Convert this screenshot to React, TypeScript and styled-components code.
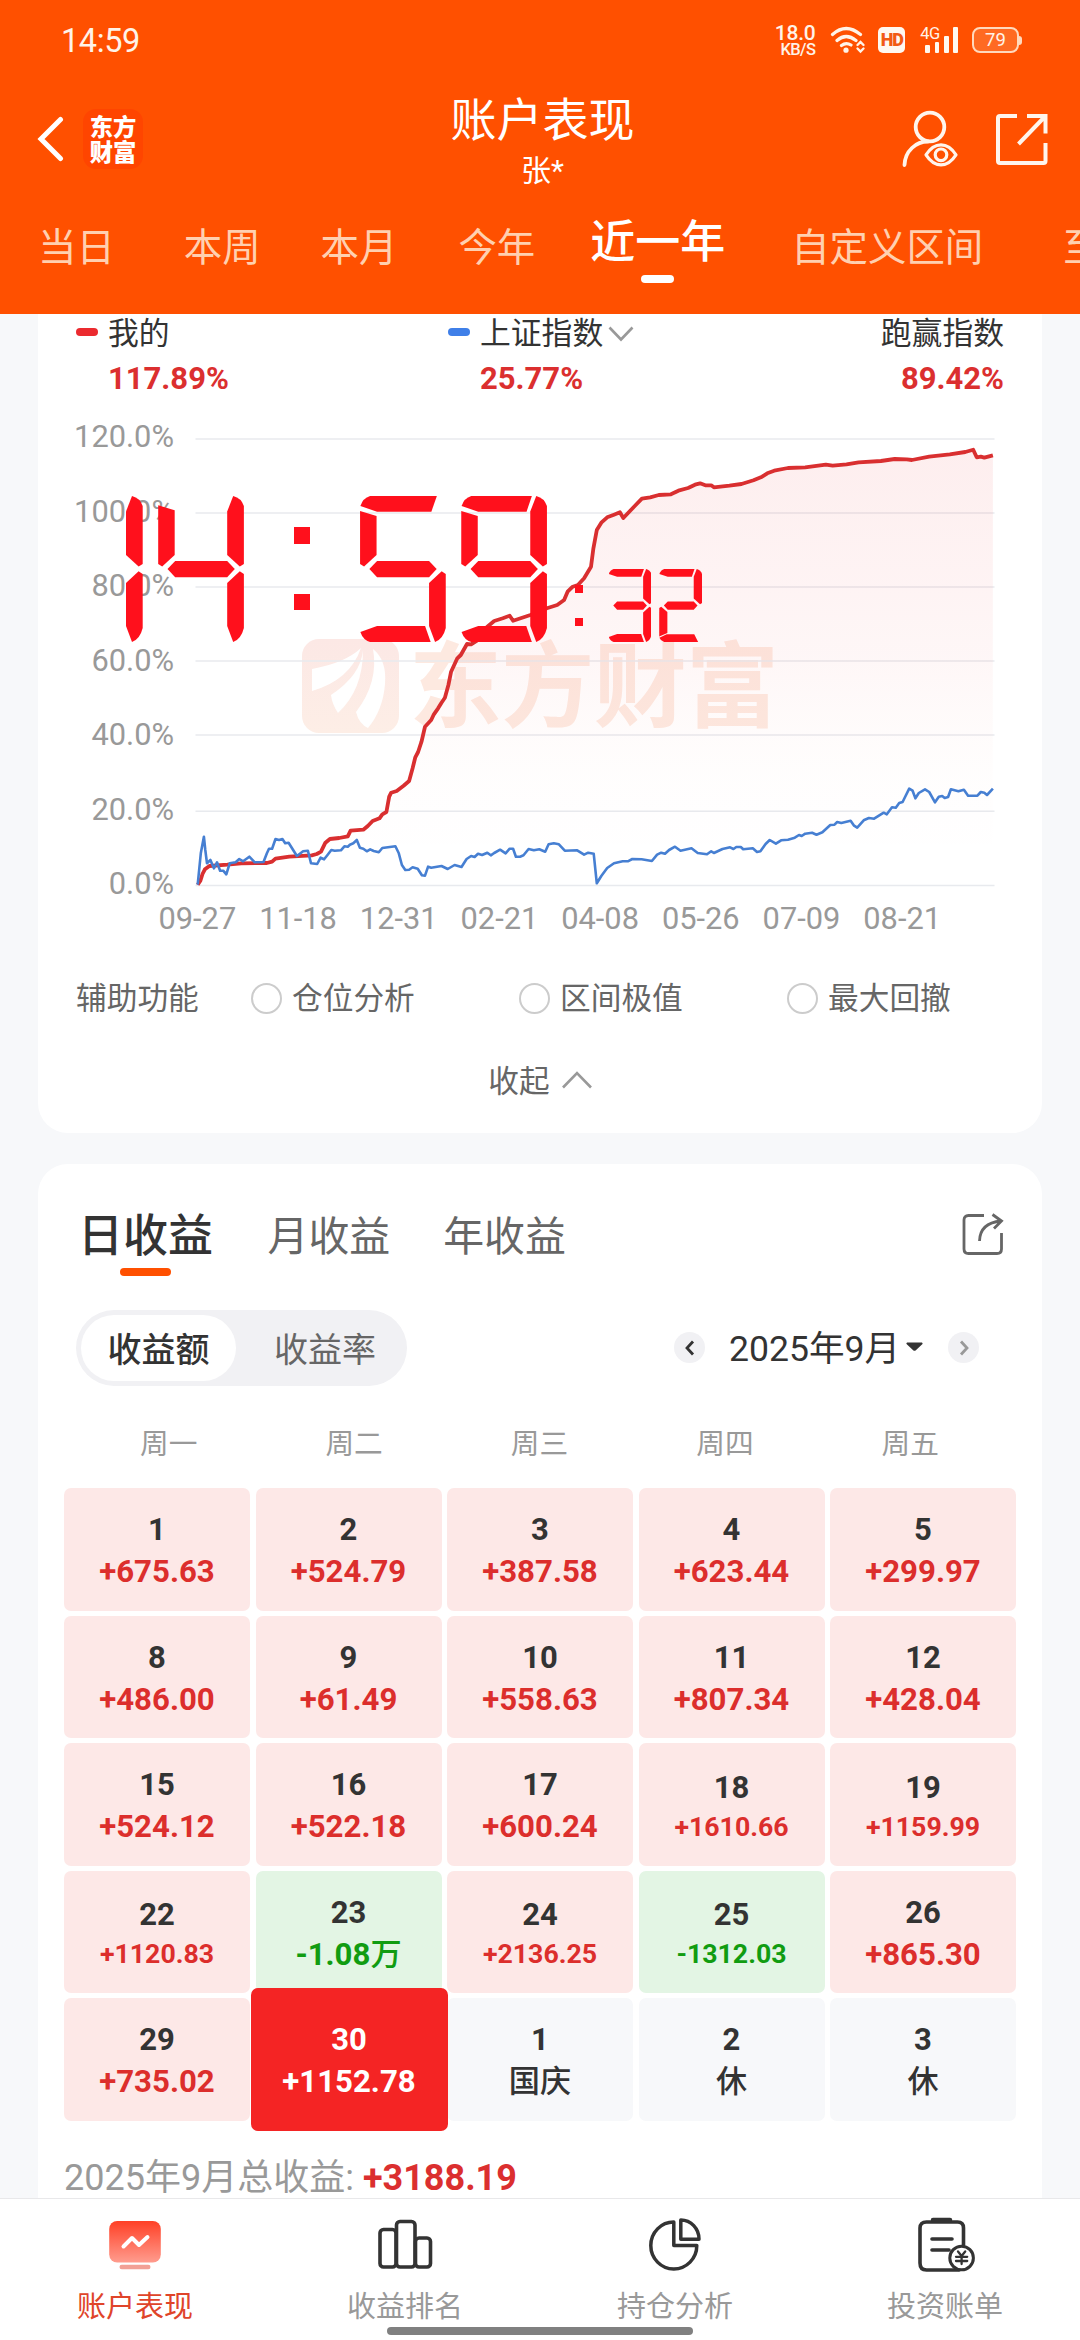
import React from 'react';
import styled, { createGlobalStyle, css } from 'styled-components';

const GlobalStyle = createGlobalStyle`
  * { box-sizing: border-box; }
  html, body { margin: 0; padding: 0; background: #f7f8fa; }
  body {
    font-family: Roboto, "Noto Sans CJK SC", sans-serif;
    line-height: 1;
    color: #333;
  }
  svg { display: block; flex: none; }
`;

const Page = styled.div`
  width: 1080px;
  height: 2340px;
  overflow: hidden;
  display: flex;
  flex-direction: column;
  position: relative;
  background: #f7f8fa;
`;

/* ---------- header ---------- */

const Header = styled.header`
  flex: none;
  height: 314px;
  background: #ff5000;
  color: #fff;
  display: flex;
  flex-direction: column;
`;

const StatusBar = styled.div`
  height: 80px;
  padding: 0 58px 0 61px;
  display: flex;
  align-items: center;
  justify-content: space-between;
`;

const StatusTime = styled.div`
  font-size: 32.5px;
  letter-spacing: -0.4px;
  color: #fff3e8;
  padding-top: 2px;
`;

const StatusIcons = styled.div`
  display: flex;
  align-items: center;
  color: #fff3e8;
`;

const NetSpeed = styled.div`
  width: 40px;
  margin-right: 15px;
  padding-top: 2px;
  text-align: right;
  font-weight: 500;
  display: flex;
  flex-direction: column;
  align-items: flex-end;
`;

const SpeedValue = styled.span`
  font-size: 21px;
  line-height: 17px;
  letter-spacing: -0.3px;
`;

const SpeedUnit = styled.span`
  font-size: 16.5px;
  line-height: 16px;
  letter-spacing: -0.6px;
`;

const HdBadge = styled.div`
  width: 27px;
  height: 26px;
  margin: 0 15px 0 12px;
  border-radius: 5px;
  background: #fff8f0;
  color: #f25a14;
  font-size: 18px;
  font-weight: 900;
  letter-spacing: -1px;
  display: flex;
  align-items: center;
  justify-content: center;
`;

const Signal = styled.div`
  display: flex;
  align-items: flex-end;
  height: 26px;
  position: relative;
  padding-left: 5px;
  gap: 4.5px;
  margin-right: 14px;
`;

const SignalBar = styled.i<{ $h: number }>`
  width: 4.8px;
  height: ${(p) => p.$h}px;
  border-radius: 1px;
  background: #fff8f0;
`;

const SignalType = styled.span`
  position: absolute;
  left: 0;
  top: 0;
  font-size: 16.5px;
  line-height: 14px;
  letter-spacing: -0.6px;
`;

const Battery = styled.div`
  width: 47px;
  height: 26px;
  border: 2.5px solid #ffd9bd;
  border-radius: 8px;
  background: #ff6a22;
  display: flex;
  align-items: center;
  justify-content: center;
  font-size: 18.5px;
`;

const BatteryNub = styled.i`
  width: 3px;
  height: 9px;
  border-radius: 0 3px 3px 0;
  background: #ffd9bd;
`;

const TitleBar = styled.div`
  height: 118px;
  padding: 0 32px 0 37px;
  display: grid;
  grid-template-columns: 1fr auto 1fr;
  align-items: center;
`;

const TitleLeft = styled.div`
  display: flex;
  align-items: center;
  gap: 19px;
`;

const Brand = styled.div`
  width: 60px;
  height: 60px;
  border-radius: 13px;
  background: #ff4500;
  font-family: "Noto Sans CJK SC", sans-serif;
  font-weight: 900;
  font-size: 23.3px;
  line-height: 25px;
  display: flex;
  flex-direction: column;
  align-items: center;
  justify-content: center;
`;

const TitleBlock = styled.div`
  display: flex;
  flex-direction: column;
  align-items: center;
  padding-top: 4px;
`;

const Title = styled.h1`
  margin: 0;
  font-weight: 400;
  font-size: 46px;
  line-height: 50px;
`;

const Subtitle = styled.div`
  margin-top: 9px;
  font-size: 30px;
  line-height: 34px;
`;

const TitleRight = styled.div`
  display: flex;
  align-items: center;
  justify-content: flex-end;
  gap: 36px;
`;

const RangeTabs = styled.nav`
  height: 116px;
  padding-left: 38px;
  display: flex;
  align-items: flex-start;
  overflow: hidden;
`;

const RangeTab = styled.div<{ $active?: boolean; $gap: number }>`
  flex: none;
  margin-right: ${(p) => p.$gap}px;
  display: flex;
  flex-direction: column;
  align-items: center;
  white-space: nowrap;
  ${(p) =>
    p.$active
      ? css`
          padding-top: 22px;
          font-size: 45px;
          line-height: 45px;
          font-weight: 500;
          color: #fff;
        `
      : css`
          padding-top: 31px;
          font-size: 38.4px;
          line-height: 38px;
          color: #ffd0b0;
        `}
`;

const RangeMark = styled.i`
  margin-top: 10px;
  width: 33px;
  height: 8px;
  border-radius: 4px;
  background: #fff;
`;

/* ---------- chart card ---------- */

const Content = styled.main`
  flex: 1;
  min-height: 0;
  overflow: hidden;
  padding: 0 38px;
  display: flex;
  flex-direction: column;
  gap: 31px;
`;

const ChartCard = styled.section`
  flex: none;
  height: 819px;
  background: #fff;
  border-radius: 0 0 30px 30px;
  padding: 0 38px;
`;

const Legend = styled.div`
  display: grid;
  grid-template-columns: 372px 1fr auto;
`;

const LegendItem = styled.div<{ $right?: boolean }>`
  display: grid;
  grid-template-columns: ${(p) => (p.$right ? 'auto' : '32px auto')};
  justify-content: ${(p) => (p.$right ? 'end' : 'start')};
  row-gap: 10px;
`;

const LegendMark = styled.i<{ $color: string }>`
  align-self: center;
  width: 22px;
  height: 8px;
  margin-top: -1px;
  border-radius: 4px;
  background: ${(p) => p.$color};
`;

const LegendName = styled.div`
  height: 36px;
  padding-top: 4px;
  display: flex;
  align-items: center;
  gap: 5px;
  font-size: 30.8px;
`;

const LegendValue = styled.div<{ $indent?: boolean }>`
  grid-column: ${(p) => (p.$indent ? 2 : 1)};
  height: 36px;
  line-height: 38px;
  font-size: 31px;
  font-weight: 700;
  color: #db2f2f;
  text-align: ${(p) => (p.$indent ? 'left' : 'right')};
`;

const Plot = styled.div`
  margin-top: 24px;
  height: 479px;
  display: flex;
  gap: 21px;
`;

const YAxis = styled.div`
  width: 98px;
  display: flex;
  flex-direction: column;
  justify-content: space-between;
  align-items: flex-end;
  padding-top: 1px;
  margin-bottom: -1px;
  font-size: 30.8px;
  line-height: 32px;
  color: #999;
`;

const XAxis = styled.div`
  margin: 1px 0 0 71px;
  display: flex;
  font-size: 30.8px;
  line-height: 37px;
  height: 36px;
  color: #999;
`;

const XLabel = styled.span`
  width: 100.7px;
  text-align: center;
`;

const Helpers = styled.div`
  margin-top: 43px;
  height: 40px;
  display: flex;
  align-items: center;
  font-size: 30.7px;
  color: #666;
`;

const HelpersLabel = styled.span`
  flex: none;
  width: 175px;
  padding-top: 1px;
`;

const Option = styled.label`
  width: 268px;
  flex: none;
  display: flex;
  align-items: center;
  gap: 10px;
`;

const OptionName = styled.span`
  padding-top: 1px;
`;

const Radio = styled.i`
  width: 31px;
  height: 31px;
  border: 2.5px solid #ccc;
  border-radius: 50%;
`;

const Collapse = styled.div`
  margin-top: 43px;
  height: 40px;
  padding-top: 1px;
  display: flex;
  align-items: center;
  justify-content: center;
  gap: 12px;
  font-size: 30.7px;
  color: #666;
`;

const CollapseIcon = styled.span`
  margin-top: -6px;
`;

/* ---------- calendar card ---------- */

const CalendarCard = styled.section`
  flex: none;
  height: 1100px;
  background: #fff;
  border-radius: 30px 30px 0 0;
  padding: 0 26px;
`;

const ProfitTabs = styled.div`
  height: 112px;
  padding: 0 12px 0 14px;
  display: flex;
  align-items: flex-end;
`;

const ProfitTab = styled.div<{ $active?: boolean }>`
  display: flex;
  flex-direction: column;
  align-items: center;
  gap: 9px;
  margin-right: ${(p) => (p.$active ? 54.5 : 53)}px;
  font-size: ${(p) => (p.$active ? 45 : 40.9)}px;
  font-weight: ${(p) => (p.$active ? 500 : 400)};
  line-height: 44px;
  color: ${(p) => (p.$active ? '#333' : '#666')};
`;

const ProfitMark = styled.i<{ $on?: boolean }>`
  width: 51px;
  height: 8px;
  border-radius: 4px;
  background: ${(p) => (p.$on ? '#ff5000' : 'transparent')};
`;

const ShareSlot = styled.div`
  margin-left: auto;
  padding-bottom: 20px;
`;

const FilterRow = styled.div`
  margin-top: 34px;
  height: 76px;
  padding: 0 37px 0 12px;
  display: flex;
  align-items: center;
  justify-content: space-between;
`;

const Segmented = styled.div`
  width: 331px;
  height: 76px;
  padding: 5px;
  border-radius: 38px;
  background: #f1f1f4;
  display: flex;
`;

const Segment = styled.div<{ $on?: boolean }>`
  width: ${(p) => (p.$on ? 155 : 166)}px;
  height: 66px;
  padding: 3px ${(p) => (p.$on ? 0 : 2)}px 0 ${(p) => (p.$on ? 0 : 14)}px;
  border-radius: 33px;
  display: flex;
  align-items: center;
  justify-content: center;
  font-size: 34px;
  font-weight: ${(p) => (p.$on ? 500 : 400)};
  color: ${(p) => (p.$on ? '#333' : '#666')};
  background: ${(p) => (p.$on ? '#fff' : 'transparent')};
`;

const MonthPicker = styled.div`
  display: flex;
  align-items: center;
  margin-top: -1px;
`;

const RoundButton = styled.span`
  width: 31px;
  height: 31px;
  border-radius: 50%;
  background: #f1f1f4;
  display: flex;
  align-items: center;
  justify-content: center;
`;

const Month = styled.div`
  width: 243px;
  padding: 5px 0 0 24px;
  display: flex;
  align-items: center;
  gap: 6px;
  font-size: 35.6px;
  white-space: nowrap;
`;

const CaretSlot = styled.span`
  margin-top: -7px;
`;

const Weekdays = styled.div`
  margin: 38px 0 0 12px;
  width: 927px;
  display: grid;
  grid-template-columns: repeat(5, 1fr);
  text-align: center;
  font-size: 28.7px;
  line-height: 40px;
  color: #999;
`;

const Days = styled.div`
  margin-top: 24px;
  display: grid;
  grid-template-columns: repeat(5, 1fr);
  grid-auto-rows: 122.5px;
  gap: 5px 5.5px;
`;

type Tone = 'up' | 'down' | 'off' | 'today';

const toneBack: Record<Tone, string> = {
  up: '#fde8e7',
  down: '#e3f5e4',
  off: '#f7f8fa',
  today: '#f42424',
};
const toneText: Record<Tone, string> = {
  up: '#dc2e2c',
  down: '#119c11',
  off: '#333',
  today: '#fff',
};

const Day = styled.div<{ $tone: Tone }>`
  border-radius: 7px;
  padding-top: 4px;
  display: flex;
  flex-direction: column;
  align-items: center;
  justify-content: center;
  background: ${(p) => toneBack[p.$tone]};
  ${(p) =>
    p.$tone === 'today' &&
    css`
      margin: -10px -6px -10px -5px;
      z-index: 1;
    `}
`;

const DayNumber = styled.span<{ $tone: Tone }>`
  font-size: 31px;
  line-height: 42px;
  font-weight: 700;
  color: ${(p) => (p.$tone === 'today' ? '#fff' : '#333')};
`;

const DayValue = styled.span<{ $tone: Tone; $small: boolean }>`
  font-size: ${(p) => (p.$small ? 26.7 : 31.2)}px;
  line-height: ${(p) => (p.$small ? 37 : 42)}px;
  font-weight: ${(p) => (p.$tone === 'off' ? 500 : 700)};
  color: ${(p) => toneText[p.$tone]};
`;

const Unit = styled.span`
  font-weight: 500;
`;

const Total = styled.div`
  margin-top: 36px;
  display: flex;
  gap: 9px;
  font-size: 36px;
  line-height: 42px;
  color: #999;
`;

const TotalValue = styled.b`
  font-weight: 700;
  color: #db2f2f;
`;

/* ---------- bottom navigation ---------- */

const BottomNav = styled.nav`
  flex: none;
  height: 142px;
  border-top: 1px solid #e8e8ea;
  background: #fff;
  display: grid;
  grid-template-columns: repeat(4, 1fr);
`;

const NavItem = styled.div<{ $active?: boolean }>`
  padding-top: 16px;
  display: flex;
  flex-direction: column;
  align-items: center;
  font-size: 29px;
  line-height: 32px;
  gap: 14px;
  color: ${(p) => (p.$active ? '#e0442a' : '#999')};
`;

const HomeIndicator = styled.i`
  position: absolute;
  left: 387px;
  bottom: 5px;
  width: 306px;
  height: 8px;
  border-radius: 4px;
  background: #808080;
`;

/* ---------- seven segment clock floating over the page ---------- */

const Clock = styled.div`
  position: absolute;
  left: 57px;
  top: 496px;
  height: 146px;
  display: flex;
  align-items: flex-end;
  z-index: 5;
`;

const ClockGroup = styled.div<{ $scale: number; $ml: number }>`
  zoom: ${(p) => p.$scale};
  margin-left: ${(p) => p.$ml}px;
  display: flex;
  gap: 15.5px;
`;

const DigitBox = styled.div`
  width: 85.7px;
  height: 146px;
  display: grid;
`;

const SegmentShape = styled.i<{ $d: string }>`
  grid-area: 1 / 1;
  background: #ff101c;
  clip-path: path('${(p) => p.$d}');
`;

const Colon = styled.div<{ $size: number; $gap: number; $ml: number; $mb: number }>`
  margin: 0 0 ${(p) => p.$mb}px ${(p) => p.$ml}px;
  display: flex;
  flex-direction: column;
  gap: ${(p) => p.$gap}px;
  i {
    width: ${(p) => p.$size}px;
    height: ${(p) => p.$size}px;
    background: #ff101c;
  }
`;

const shapes: Record<string, string> = {
  a: 'M.3 10Q3 2 10 0H70.6L65.3 15.7H17Z',
  A: 'M.3 10Q3 2 10 0H76.8L71.3 15.7H17Z',
  b: 'M75 0Q83 2 85.7 10V68L81.6 70.5L69 59V15.5Z',
  c: 'M81.6 75.3L85.7 78V132Q83 143 75 146L69 130V87Z',
  d: 'M.3 136L17 130H65L70.6 146H10Q3 144 .3 136Z',
  D: 'M.3 137.5L15 130.5H70L77.8 146H10Q3 144 .3 137.5Z',
  e: 'M0 78L4 75.3L16.3 86V128L0 135Z',
  f: 'M0 15L16.5 20V59L4 70.5L0 68Z',
  F: 'M0 9.3L16.5 14.3V59L4 70.5L0 68Z',
  g: 'M9.3 73L17 65H69L76.6 73L69 81.3H17Z',
};

const lit: Record<string, string> = {
  '1': 'bc',
  '2': 'abgeD',
  '3': 'abgcd',
  '4': 'Fbgc',
  '5': 'Afgcd',
  '9': 'abcdfg',
};

function Digit({ value }: { value: string }) {
  return (
    <DigitBox>
      {lit[value].split('').map((s) => (
        <SegmentShape key={s} $d={shapes[s]} />
      ))}
    </DigitBox>
  );
}

/* ---------- chart ---------- */

type Pt = [number, number];

const mineEarly: Pt[] = [
  [574, 794], [582, 782], [588, 762], [595, 748], [608, 738], [660, 734], [700, 730], [775, 729], [790, 725],
  [800, 716], [840, 710], [905, 706], [920, 702], [932, 695], [945, 668], [958, 657], [985, 654], [1010, 649],
  [1018, 632], [1055, 629], [1068, 618], [1082, 603], [1102, 595], [1110, 583], [1122, 576], [1130, 530],
  [1136, 518], [1152, 513], [1172, 497], [1188, 483], [1198, 445], [1206, 412], [1214, 396], [1224, 365],
  [1234, 320], [1252, 300], [1260, 283], [1272, 265], [1282, 248], [1292, 233], [1302, 195], [1310, 155],
  [1328, 115], [1338, 105], [1356, 72], [1368, 73], [1385, 62], [1415, 20], [1435, 3], [1460, -5], [1480, -13],
  [1490, 2], [1540, -15],
];

const mineLate: Pt[] = [
  [20, -35], [50, -45], [70, -60], [80, -85], [95, -100], [110, -105], [128, -125], [148, -160], [155, -215],
  [165, -270], [178, -292], [195, -308], [215, -316], [232, -323], [242, -306], [262, -328], [278, -345],
  [296, -364], [320, -368], [345, -375], [380, -377], [402, -388], [430, -396], [450, -406], [465, -410],
  [480, -404], [497, -404], [505, -398], [550, -403], [585, -408], [620, -419], [645, -430], [660, -440],
  [680, -448], [720, -456], [770, -458], [830, -466], [850, -463], [890, -467], [925, -473], [990, -477],
  [1030, -483], [1065, -482], [1080, -480], [1130, -490], [1190, -497], [1235, -504], [1258, -511],
  [1268, -488], [1280, -490], [1290, -487], [1315, -494],
];

const indexEarly: Pt[] = [
  [574, 794], [583, 700], [592, 650], [596, 690], [601, 730], [611, 720], [621, 745], [630, 727], [639, 752],
  [648, 752], [657, 763], [667, 730], [684, 727], [695, 717], [706, 724], [724, 710], [740, 727], [765, 726],
  [775, 700], [781, 686], [790, 686], [800, 657], [810, 660], [820, 657], [828, 670], [838, 668], [862, 708],
  [880, 694], [894, 692], [903, 730], [921, 732], [931, 713], [941, 718], [951, 705], [962, 690], [972, 692],
  [990, 691], [1000, 679], [1010, 680], [1016, 674], [1026, 670], [1036, 660], [1045, 683], [1055, 686],
  [1065, 694], [1075, 688], [1085, 693], [1100, 697], [1110, 684], [1148, 679], [1158, 700], [1167, 735],
  [1177, 750], [1188, 749], [1198, 742], [1213, 746], [1225, 766], [1234, 767], [1243, 740], [1252, 743],
  [1282, 738], [1300, 747], [1320, 735], [1340, 741], [1355, 717], [1368, 708], [1378, 711], [1388, 701],
  [1400, 705], [1415, 698], [1425, 706], [1435, 699], [1452, 689], [1468, 700], [1480, 686], [1490, 686],
  [1498, 710], [1510, 710], [1520, 706], [1535, 687], [1550, 691], [1566, 688],
];

const indexLate: Pt[] = [
  [15, 695], [25, 673], [40, 670], [55, 673], [72, 692], [108, 691], [128, 704], [140, 698], [156, 701],
  [165, 790], [178, 768], [195, 744], [215, 730], [240, 724], [255, 724], [268, 717], [295, 718], [325, 723],
  [340, 704], [352, 698], [363, 701], [375, 690], [392, 680], [408, 692], [440, 685], [458, 699], [485, 703],
  [497, 694], [505, 699], [530, 687], [552, 682], [562, 687], [570, 681], [583, 681], [590, 688], [618, 685],
  [630, 696], [640, 694], [655, 672], [667, 660], [685, 671], [700, 661], [720, 659], [740, 653], [752, 645],
  [760, 648], [770, 641], [790, 638], [803, 644], [820, 637], [843, 615], [855, 614], [863, 606], [875, 609],
  [902, 602], [912, 617], [921, 623], [940, 601], [955, 594], [970, 596], [998, 578], [1007, 583],
  [1022, 562], [1033, 563], [1043, 549], [1053, 546], [1072, 506], [1082, 512], [1090, 535], [1100, 519],
  [1118, 508], [1130, 516], [1147, 547], [1158, 530], [1168, 528], [1175, 534], [1185, 531], [1193, 508],
  [1215, 514], [1231, 509], [1243, 527], [1270, 527], [1280, 516], [1290, 518], [1298, 525], [1315, 506],
];

// Both halves of a series become one line in the plot's own pixels.
const toLine = (early: Pt[], late: Pt[]) =>
  [...early, ...late.map(([x, y]): Pt => [x + 1568, y])]
    .map(([x, y]) => `${(x / 2.9037 - 195).toFixed(1)},${(y / 3 + 200).toFixed(1)}`)
    .join(' ');

const mineLine = toLine(mineEarly, mineLate);
const indexLine = toLine(indexEarly, indexLate);
const gridLines = [19, 93, 167, 241, 315, 391.3, 465.5];

function PerformanceChart() {
  return (
    <svg width="802" height="479" viewBox="0 0 802 479">
      <defs>
        <linearGradient id="area" x1="0" y1="30" x2="0" y2="440" gradientUnits="userSpaceOnUse">
          <stop offset="0" stopColor="#eb2a2f" stopOpacity="0.08" />
          <stop offset="0.5" stopColor="#eb2a2f" stopOpacity="0.04" />
          <stop offset="0.8" stopColor="#eb6a4f" stopOpacity="0.01" />
          <stop offset="1" stopColor="#eb2a2f" stopOpacity="0" />
        </linearGradient>
        <linearGradient id="mark" x1="0" y1="0" x2="0" y2="1">
          <stop offset="0" stopColor="#fce8e5" />
          <stop offset="1" stopColor="#fdeee6" />
        </linearGradient>
      </defs>
      <rect x="107" y="219" width="97" height="94" rx="17" fill="url(#mark)" />
      <path
        fill="#fff"
        d="M117 249Q150 243 166 228Q155 260 117 271ZM168 230Q166 255 136 275Q137 284 143 293Q168 270 168 230ZM178 229Q192 240 190 264Q188 290 173 308Q164 304 161 292Q184 262 178 229Z"
      />
      <text
        x="214"
        y="300"
        fontSize="93"
        fontWeight="700"
        fill="#fde9e0"
        fontFamily="'Noto Sans CJK SC', sans-serif"
        textLength="370"
      >
        东方财富
      </text>
      {gridLines.map((y) => (
        <line key={y} x1="0.5" x2="799.5" y1={y} y2={y} stroke="#e8eaee" strokeWidth="1.4" />
      ))}
      <polygon points={`${mineLine} 797.7,465 2.7,465`} fill="url(#area)" />
      <polyline points={mineLine} fill="none" stroke="#d92f30" strokeWidth="3.8" strokeLinejoin="round" />
      <polyline points={indexLine} fill="none" stroke="#467fd2" strokeWidth="2.6" strokeLinejoin="round" />
    </svg>
  );
}

/* ---------- icons ---------- */

const BackIcon = () => (
  <svg width="27" height="46" viewBox="0 0 27 46" fill="none" stroke="#fff" strokeWidth="5" strokeLinecap="round">
    <path d="M23.5 3.5L4 23L23.5 42.5" />
  </svg>
);

const PersonEyeIcon = () => (
  <svg width="58" height="58" viewBox="0 0 58 58" fill="none" stroke="#fff5ec" strokeWidth="3.8" strokeLinecap="round">
    <circle cx="29" cy="17" r="14.3" />
    <path d="M3.5 55C4 41 15 31.5 27 31.5" />
    <path d="M25 44.8C30 37 35 34.800 40 34.800S50 37 55 44.800C50 52.500 45 54.800 40 54.800S30 52.500 25 44.800Z" strokeWidth="3.2" strokeLinejoin="round" />
    <circle cx="40" cy="44.800" r="5.800" strokeWidth="3.2" />
  </svg>
);

const OpenIcon = () => (
  <svg width="53" height="53" viewBox="0 0 53 53" fill="none" stroke="#fff5ec" strokeWidth="4">
    <path d="M22 3H5Q3 3 3 5V48Q3 50 5 50H48.500Q50.500 50 50.500 48V30" />
    <path d="M32 3H50.500V20.500M50 3.500L23.500 31" />
  </svg>
);

const WifiIcon = () => (
  <svg width="36" height="28" viewBox="0 0 36 28" fill="none" stroke="#fff3e8" strokeWidth="3.2" strokeLinecap="round">
    <path d="M2.500 8.500Q16 -3.500 30.500 8.500M7 14.500Q16 6.500 26 14.500M11.500 19.500Q16 16 21 19" />
    <circle cx="16" cy="24.200" r="2.600" fill="#fff3e8" stroke="none" />
    <path d="M27.500 19L30.500 16L33.500 19M27.500 22.500L30.500 25.500L33.500 22.500" strokeWidth="2.400" />
  </svg>
);

const ChevronDown = () => (
  <svg width="26" height="16" viewBox="0 0 26 16" fill="none" stroke="#999" strokeWidth="2.600">
    <path d="M1.500 1.500L13 13.500L24.500 1.500" />
  </svg>
);

const ChevronUp = () => (
  <svg width="30" height="18" viewBox="0 0 30 18" fill="none" stroke="#999" strokeWidth="2.600">
    <path d="M1 16.500L15 2L29 16.500" />
  </svg>
);

const ShareIcon = () => (
  <svg width="42" height="43" viewBox="0 0 42 43" fill="none" stroke="#666" strokeWidth="2.800">
    <path d="M22 2.500H6.500Q2 2.500 2 7V36Q2 40.500 6.500 40.500H35Q39.500 40.500 39.500 36V20" />
    <path d="M17.500 28Q18 10 39 8M30.500 1.500L39.500 8L32 15.500" />
  </svg>
);

const SmallArrow = ({ next }: { next?: boolean }) => (
  <svg width="10" height="16" viewBox="0 0 10 16" fill="none" stroke={next ? '#999' : '#333'} strokeWidth="2.800">
    <path d={next ? 'M2 1.500L8 8L2 14.500' : 'M8 1.500L2 8L8 14.500'} />
  </svg>
);

const Caret = () => (
  <svg width="17" height="9" viewBox="0 0 16 9" preserveAspectRatio="none">
    <path d="M1 .5H15Q16 1 15.500 2L9 8.500Q8 9 7 8.500L.5 2Q0 1 1 .5Z" fill="#333" />
  </svg>
);

const AccountIcon = () => (
  <svg width="60" height="62" viewBox="0 0 60 62">
    <defs>
      <linearGradient id="acc" x1="0" y1="0" x2="0" y2="1">
        <stop offset="0" stopColor="#ff4026" />
        <stop offset="1" stopColor="#ff9c8e" />
      </linearGradient>
    </defs>
    <rect x="4.200" y="6" width="51.600" height="41.500" rx="8" fill="url(#acc)" />
    <path d="M18.500 31.500L27 23L34 30L42.500 22" fill="none" stroke="#fff" strokeWidth="4" strokeLinecap="round" strokeLinejoin="round" />
    <rect x="14.500" y="49.800" width="31" height="4.400" rx="2.200" fill="#f2a095" />
  </svg>
);

const RankIcon = () => (
  <svg width="60" height="62" viewBox="0 0 60 62" fill="none" stroke="#333" strokeWidth="3.600">
    <rect x="5" y="14.500" width="16" height="37.500" rx="3.500" />
    <rect x="21.500" y="6.500" width="18.500" height="45.500" rx="3.500" />
    <rect x="40.500" y="23" width="15" height="29" rx="3.500" />
  </svg>
);

const PieIcon = () => (
  <svg width="60" height="62" viewBox="0 0 60 62" fill="none" stroke="#333" strokeWidth="3.500" strokeLinejoin="round">
    <path d="M28.800 7A23 23.500 0 1 0 51.800 30.500H28.800Z" />
    <path d="M35.800 5A18.200 19 0 0 1 54 24.200H35.800Z" />
  </svg>
);

const BillIcon = () => (
  <svg width="60" height="62" viewBox="0 0 60 62" fill="none" stroke="#333" strokeWidth="3.600" strokeLinecap="round" strokeLinejoin="round">
    <path d="M48.500 30V13Q48.500 7 42.500 7H11.500Q5 7 5 13V48Q5 55 11.500 55H44" />
    <path d="M18 5H35" strokeWidth="4.500" />
    <path d="M17 24H37M17 35H34" />
    <circle cx="46.600" cy="43" r="11.800" fill="#fff" strokeWidth="3" />
    <path d="M43 36.500L46.600 41L50.200 36.500M46.600 41V49M41 41.800H52.200M41 46H52.200" strokeWidth="2.300" />
  </svg>
);

/* ---------- data ---------- */

const ranges = [
  { label: '当日', gap: 69 },
  { label: '本周', gap: 60 },
  { label: '本月', gap: 61 },
  { label: '今年', gap: 55 },
  { label: '近一年', gap: 66, active: true },
  { label: '自定义区间', gap: 80 },
  { label: '至今', gap: 0 },
];

const yLabels = ['120.0%', '100.0%', '80.0%', '60.0%', '40.0%', '20.0%', '0.0%'];
const xLabels = ['09-27', '11-18', '12-31', '02-21', '04-08', '05-26', '07-09', '08-21'];

const days: [string, string, Tone][] = [
  ['1', '+675.63', 'up'], ['2', '+524.79', 'up'], ['3', '+387.58', 'up'], ['4', '+623.44', 'up'], ['5', '+299.97', 'up'],
  ['8', '+486.00', 'up'], ['9', '+61.49', 'up'], ['10', '+558.63', 'up'], ['11', '+807.34', 'up'], ['12', '+428.04', 'up'],
  ['15', '+524.12', 'up'], ['16', '+522.18', 'up'], ['17', '+600.24', 'up'], ['18', '+1610.66', 'up'], ['19', '+1159.99', 'up'],
  ['22', '+1120.83', 'up'], ['23', '-1.08万', 'down'], ['24', '+2136.25', 'up'], ['25', '-1312.03', 'down'], ['26', '+865.30', 'up'],
  ['29', '+735.02', 'up'], ['30', '+1152.78', 'today'], ['1', '国庆', 'off'], ['2', '休', 'off'], ['3', '休', 'off'],
];

export default function App() {
  return (
    <Page>
      <GlobalStyle />
      <Header>
        <StatusBar>
          <StatusTime>14:59</StatusTime>
          <StatusIcons>
            <NetSpeed>
              <SpeedValue>18.0</SpeedValue>
              <SpeedUnit>KB/S</SpeedUnit>
            </NetSpeed>
            <WifiIcon />
            <HdBadge>HD</HdBadge>
            <Signal>
              <SignalType>4G</SignalType>
              <SignalBar $h={8} />
              <SignalBar $h={11} />
              <SignalBar $h={17} />
              <SignalBar $h={26} />
            </Signal>
            <Battery>79</Battery>
            <BatteryNub />
          </StatusIcons>
        </StatusBar>
        <TitleBar>
          <TitleLeft>
            <BackIcon />
            <Brand>
              <span>东方</span>
              <span>财富</span>
            </Brand>
          </TitleLeft>
          <TitleBlock>
            <Title>账户表现</Title>
            <Subtitle>张*</Subtitle>
          </TitleBlock>
          <TitleRight>
            <PersonEyeIcon />
            <OpenIcon />
          </TitleRight>
        </TitleBar>
        <RangeTabs>
          {ranges.map((r) => (
            <RangeTab key={r.label} $active={r.active} $gap={r.gap}>
              {r.label}
              {r.active && <RangeMark />}
            </RangeTab>
          ))}
        </RangeTabs>
      </Header>

      <Content>
        <ChartCard>
          <Legend>
            <LegendItem>
              <LegendMark $color="#eb2a2f" />
              <LegendName>我的</LegendName>
              <LegendValue $indent>117.89%</LegendValue>
            </LegendItem>
            <LegendItem>
              <LegendMark $color="#3f7fe8" />
              <LegendName>
                上证指数
                <ChevronDown />
              </LegendName>
              <LegendValue $indent>25.77%</LegendValue>
            </LegendItem>
            <LegendItem $right>
              <LegendName>跑赢指数</LegendName>
              <LegendValue>89.42%</LegendValue>
            </LegendItem>
          </Legend>
          <Plot>
            <YAxis>
              {yLabels.map((l) => (
                <span key={l}>{l}</span>
              ))}
            </YAxis>
            <PerformanceChart />
          </Plot>
          <XAxis>
            {xLabels.map((l) => (
              <XLabel key={l}>{l}</XLabel>
            ))}
          </XAxis>
          <Helpers>
            <HelpersLabel>辅助功能</HelpersLabel>
            {['仓位分析', '区间极值', '最大回撤'].map((l) => (
              <Option key={l}>
                <Radio />
                <OptionName>{l}</OptionName>
              </Option>
            ))}
          </Helpers>
          <Collapse>
            收起
            <CollapseIcon>
              <ChevronUp />
            </CollapseIcon>
          </Collapse>
        </ChartCard>

        <CalendarCard>
          <ProfitTabs>
            <ProfitTab $active>
              日收益
              <ProfitMark $on />
            </ProfitTab>
            <ProfitTab>
              月收益
              <ProfitMark />
            </ProfitTab>
            <ProfitTab>
              年收益
              <ProfitMark />
            </ProfitTab>
            <ShareSlot>
              <ShareIcon />
            </ShareSlot>
          </ProfitTabs>
          <FilterRow>
            <Segmented>
              <Segment $on>收益额</Segment>
              <Segment>收益率</Segment>
            </Segmented>
            <MonthPicker>
              <RoundButton>
                <SmallArrow />
              </RoundButton>
              <Month>
                2025年9月
                <CaretSlot>
                  <Caret />
                </CaretSlot>
              </Month>
              <RoundButton>
                <SmallArrow next />
              </RoundButton>
            </MonthPicker>
          </FilterRow>
          <Weekdays>
            {['周一', '周二', '周三', '周四', '周五'].map((d) => (
              <span key={d}>{d}</span>
            ))}
          </Weekdays>
          <Days>
            {days.map(([n, v, tone], i) => (
              <Day key={i} $tone={tone}>
                <DayNumber $tone={tone}>{n}</DayNumber>
                <DayValue $tone={tone} $small={v.length > 7 && tone !== 'today'}>
                  {v.replace('万', '')}
                  {v.endsWith('万') && <Unit>万</Unit>}
                </DayValue>
              </Day>
            ))}
          </Days>
          <Total>
            2025年9月总收益:
            <TotalValue>+3188.19</TotalValue>
          </Total>
        </CalendarCard>
      </Content>

      <BottomNav>
        <NavItem $active>
          <AccountIcon />
          账户表现
        </NavItem>
        <NavItem>
          <RankIcon />
          收益排名
        </NavItem>
        <NavItem>
          <PieIcon />
          持仓分析
        </NavItem>
        <NavItem>
          <BillIcon />
          投资账单
        </NavItem>
      </BottomNav>

      <Clock role="img" aria-label="14:59:32">
        <ClockGroup $scale={1} $ml={0}>
          <Digit value="1" />
          <Digit value="4" />
        </ClockGroup>
        <Colon $size={16.5} $gap={50} $ml={49.800} $mb={32}>
          <i />
          <i />
        </Colon>
        <ClockGroup $scale={1} $ml={49.900}>
          <Digit value="5" />
          <Digit value="9" />
        </ClockGroup>
        <Colon $size={8} $gap={25} $ml={28.500} $mb={16}>
          <i />
          <i />
        </Colon>
        <ClockGroup $scale={0.5} $ml={50.400}>
          <Digit value="3" />
          <Digit value="2" />
        </ClockGroup>
      </Clock>
      <HomeIndicator />
    </Page>
  );
}
